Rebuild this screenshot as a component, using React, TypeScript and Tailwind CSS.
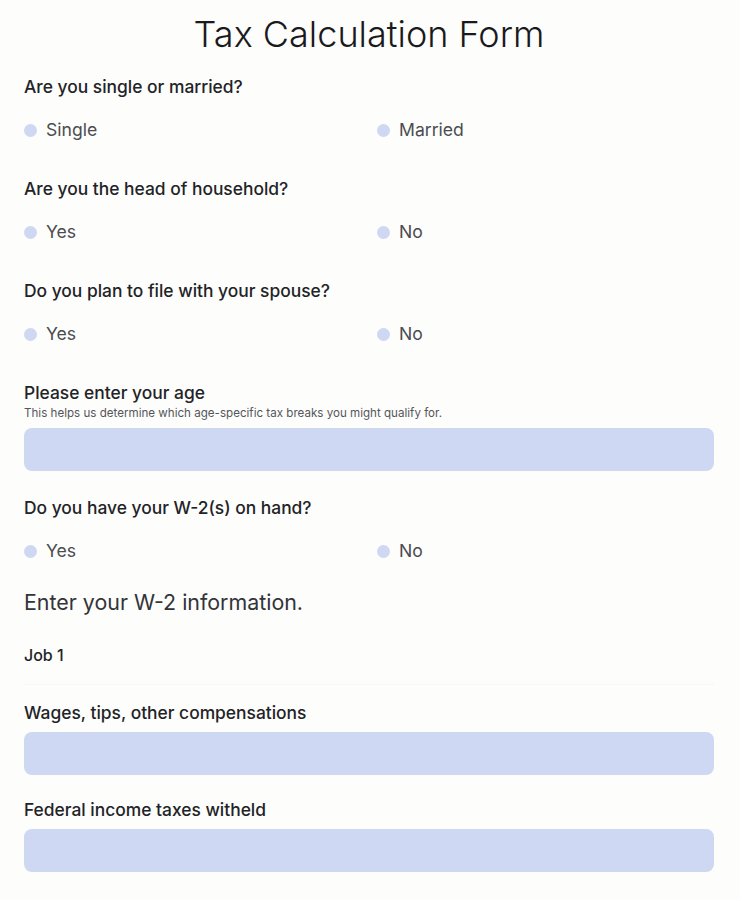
import { useState } from 'react';

type Choice = { name: string; options: [string, string] };

const font = { fontFamily: 'Inter, "Noto Sans", sans-serif' };

function Question({ label, name, options }: { label: string } & Choice) {
  const [value, setValue] = useState<string | null>(null);
  return (
    <div>
      <p className="text-[17.4px] font-medium text-[#222326] leading-6">{label}</p>
      <div className="grid grid-cols-2 gap-4 mt-[19px]">
        {options.map((opt) => (
          <label key={opt} className="flex items-center gap-[9px] cursor-pointer">
            <input
              type="radio"
              name={name}
              checked={value === opt}
              onChange={() => setValue(opt)}
              className="appearance-none w-[13px] h-[13px] rounded-full bg-[#cfd8f2] checked:bg-[#6b7fd7]"
            />
            <span className="text-[17.6px] text-[#4b4c50] leading-6">{opt}</span>
          </label>
        ))}
      </div>
    </div>
  );
}

function Field({ label, hint }: { label: string; hint?: string }) {
  return (
    <div>
      <p className="text-[17.4px] font-medium text-[#222326] leading-6">{label}</p>
      {hint && <p className="text-[11.6px] text-[#55565a] leading-4">{hint}</p>}
      <input
        type="text"
        className="mt-[7px] w-full h-[43px] rounded-lg bg-[#cfd8f2] px-3 text-[16px] outline-none"
      />
    </div>
  );
}

export default function App() {
  return (
    <div className="min-h-screen bg-[#fdfdfc] pl-6 pr-[26px]" style={font}>
      <h1 className="text-center text-[36px] font-light text-[#1a1a1c] pt-[13px] leading-[42px]">
        Tax Calculation Form
      </h1>

      <div className="mt-[20px] space-y-[35px]">
        <Question label="Are you single or married?" name="status" options={['Single', 'Married']} />
        <Question label="Are you the head of household?" name="head" options={['Yes', 'No']} />
        <Question label="Do you plan to file with your spouse?" name="spouse" options={['Yes', 'No']} />
      </div>

      <div className="mt-[35px]">
        <Field
          label="Please enter your age"
          hint="This helps us determine which age-specific tax breaks you might qualify for."
        />
      </div>

      <div className="mt-[25px]">
        <Question label="Do you have your W-2(s) on hand?" name="w2" options={['Yes', 'No']} />
      </div>

      <h2 className="mt-[25px] text-[21.4px] text-[#333438] leading-7">Enter your W-2 information.</h2>

      <div className="mt-[27px] pb-[17px] border-b border-[#f6f6f5]">
        <p className="text-[16px] font-medium text-[#222326] leading-6">Job 1</p>
      </div>

      <div className="mt-[16px] space-y-[23px]">
        <Field label="Wages, tips, other compensations" />
        <Field label="Federal income taxes witheld" />
      </div>
    </div>
  );
}
